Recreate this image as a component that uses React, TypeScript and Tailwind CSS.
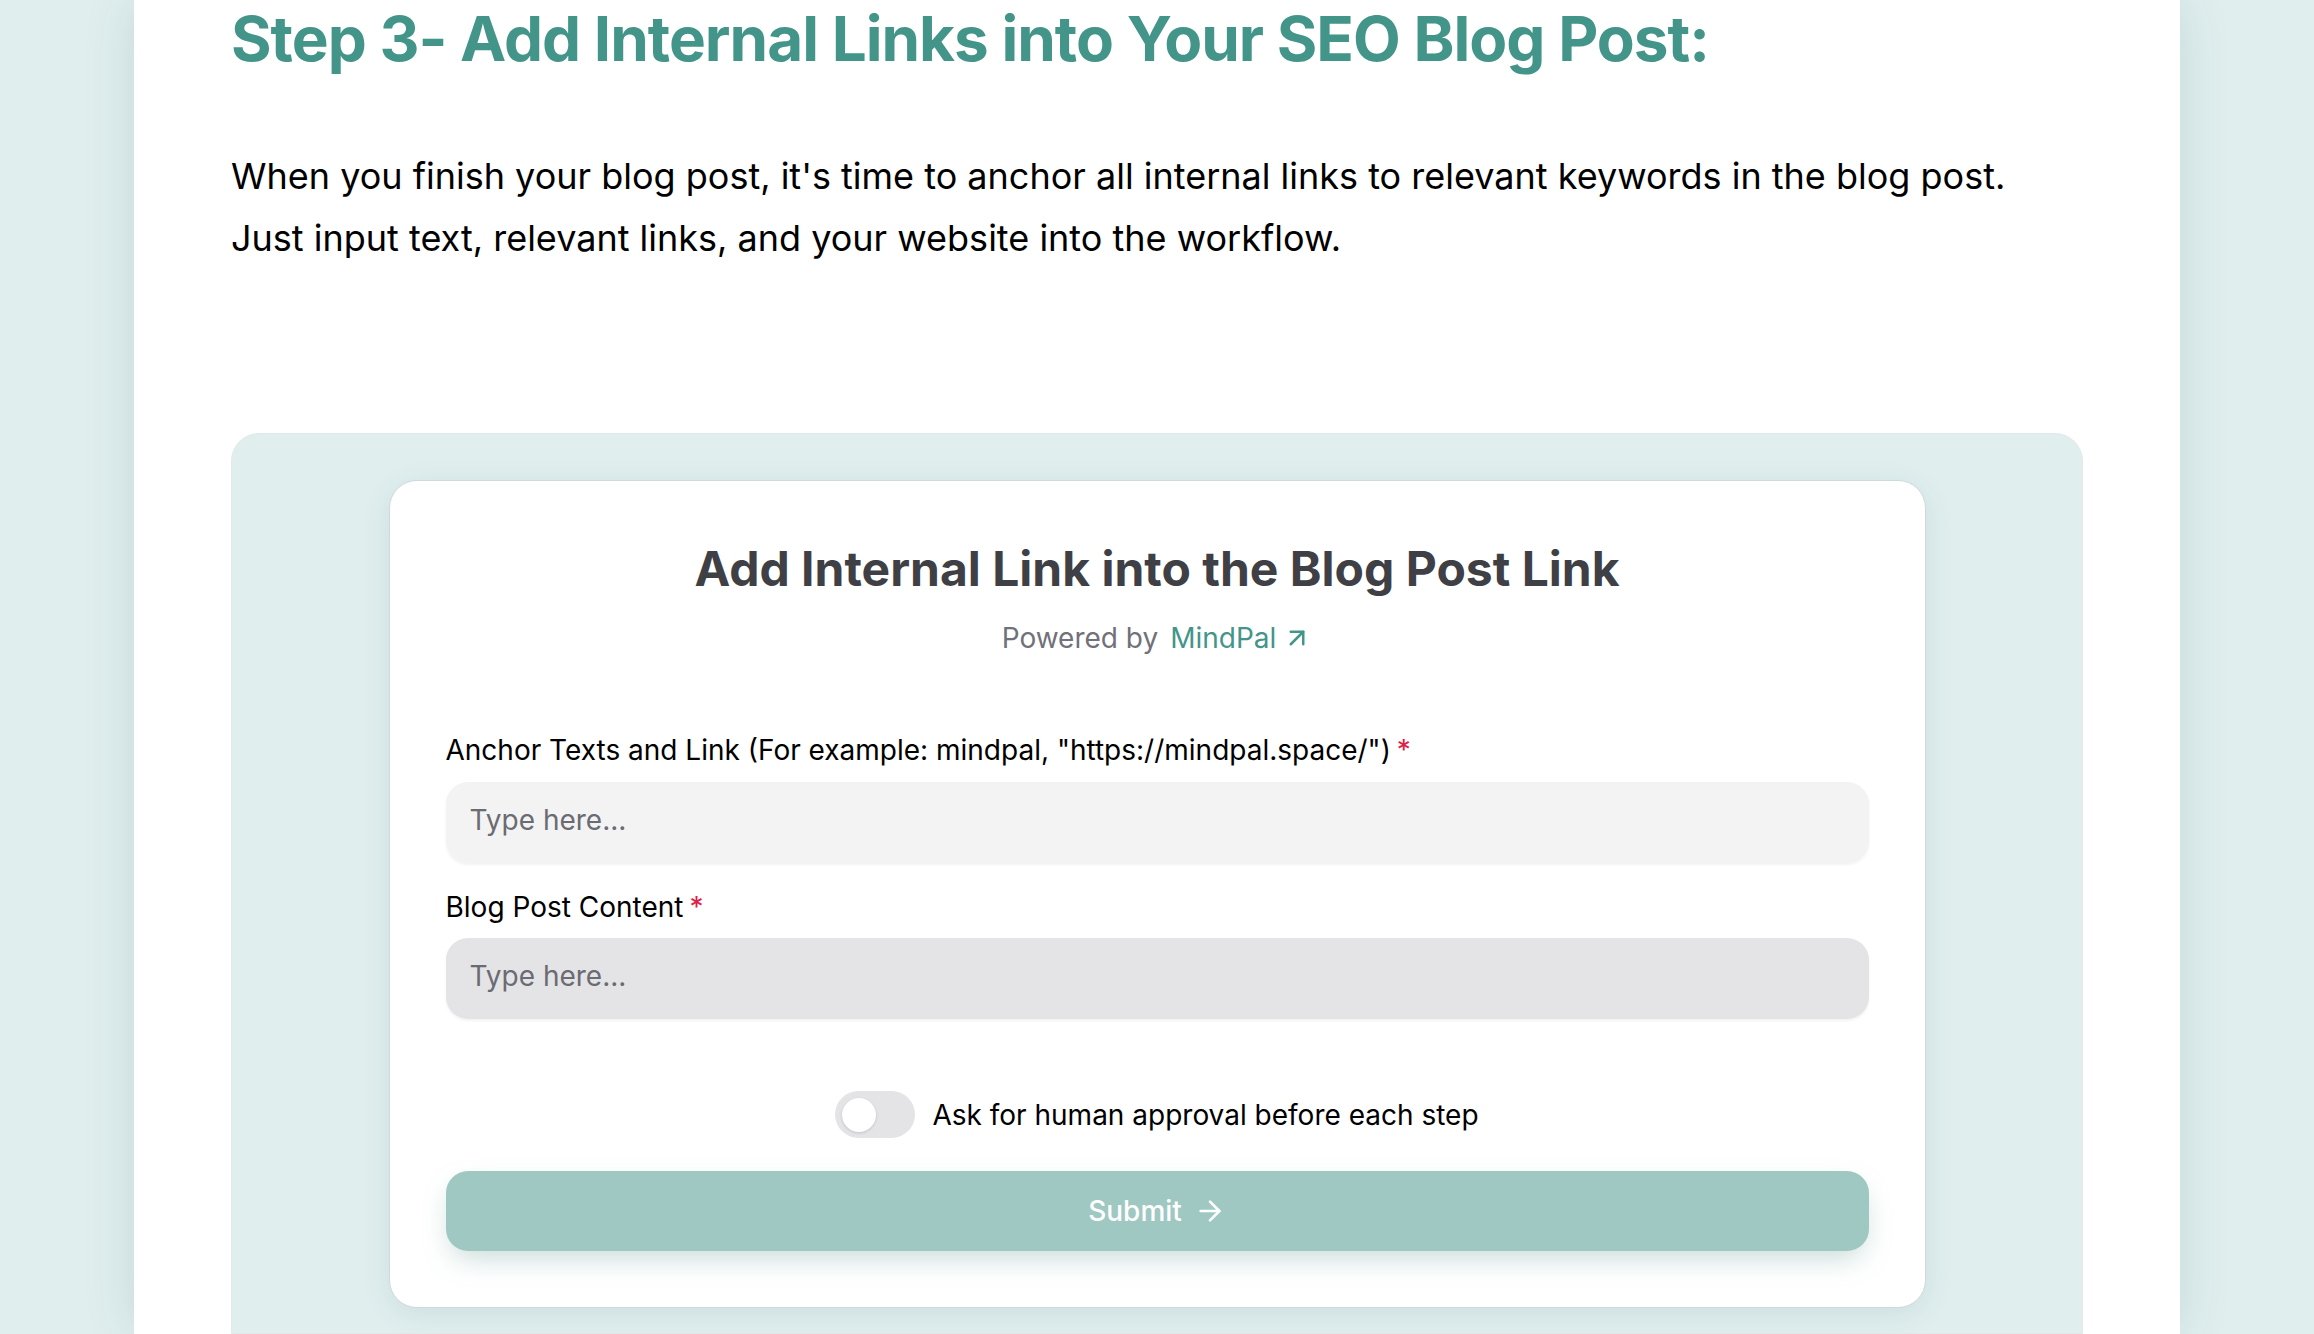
import React from "react";
import { ArrowRight, ArrowUpRight } from "lucide-react";

const font = { fontFamily: "Inter, 'Noto Sans', sans-serif" };

function Label({ text }: { text: string }) {
  return (
    <div className="text-[28px] leading-[42px] text-black">
      {text}
      <span className="ml-[6px] text-[#e11d48]">*</span>
    </div>
  );
}

function Field({ dark }: { dark?: boolean }) {
  return (
    <div
      className={`flex h-[81px] items-center rounded-[22px] px-[24px] pb-[5px] text-[28px] text-[#6b6b73] shadow-[0_2px_3px_rgba(0,0,0,0.05)] ${
        dark ? "bg-[#e4e4e7]" : "bg-[#f3f3f4]"
      }`}
    >
      Type here...
    </div>
  );
}

export default function App() {
  return (
    <div style={font} className="flex h-[1334px] w-full justify-center overflow-hidden bg-[#e0eeee]">
      <div className="flex w-[2046px] flex-col bg-white px-[97px] pt-[2px] shadow-[0_0_50px_rgba(0,70,70,0.12)]">
        <h2 className="text-[62px] font-bold leading-[74px] tracking-[-1px] text-[#43958a]">
          Step 3- Add Internal Links into Your SEO Blog Post:
        </h2>
        <p className="mt-[69px] text-[36px] leading-[62px] text-black">
          When you finish your blog post, it's time to anchor all internal links to relevant keywords in the blog post.
          <br />
          Just input text, relevant links, and your website into the workflow.
        </p>
        <div className="mt-[164px] flex-1 rounded-t-[28px] border border-[#e3e9e9] bg-[#e0eeee] pt-[46px]">
          <div className="mx-auto w-[1537px] rounded-[28px] border border-[#cfd9d9] bg-white px-[56px] pb-[56px] pt-[58px] shadow-[0_6px_30px_rgba(0,80,80,0.09)]">
            <h3 className="text-center text-[48px] font-bold leading-[60px] text-[#3f3f46]">
              Add Internal Link into the Blog Post Link
            </h3>
            <div className="mt-[18px] flex items-center justify-center text-[28px] leading-[42px]">
              <span className="text-[#71717a]">Powered by</span>
              <span className="ml-[12px] text-[#43958a]">MindPal</span>
              <ArrowUpRight className="ml-[6px] text-[#43958a]" size={30} strokeWidth={2} />
            </div>
            <div className="mt-[70px]">
              <Label text={'Anchor Texts and Link (For example: mindpal, "https://mindpal.space/")'} />
            </div>
            <div className="mt-[11px]">
              <Field />
            </div>
            <div className="mt-[23px]">
              <Label text="Blog Post Content" />
            </div>
            <div className="mt-[10px]">
              <Field dark />
            </div>
            <div className="mt-[72px] flex items-center justify-center">
              <div className="flex h-[47px] w-[80px] items-center rounded-full bg-[#e4e4e7] px-[7px]">
                <div className="h-[34px] w-[34px] rounded-full bg-white shadow-[0_1px_3px_rgba(0,0,0,0.15)]" />
              </div>
              <span className="ml-[17px] text-[28px] leading-[42px] text-black">
                Ask for human approval before each step
              </span>
            </div>
            <div className="mt-[33px] flex h-[80px] items-center justify-center rounded-[22px] bg-[#a0c8c3] text-[28px] font-medium text-white shadow-[0_12px_28px_-6px_rgba(90,150,140,0.35)]">
              Submit
              <ArrowRight className="ml-[12px]" size={32} strokeWidth={2} />
            </div>
          </div>
        </div>
      </div>
    </div>
  );
}
